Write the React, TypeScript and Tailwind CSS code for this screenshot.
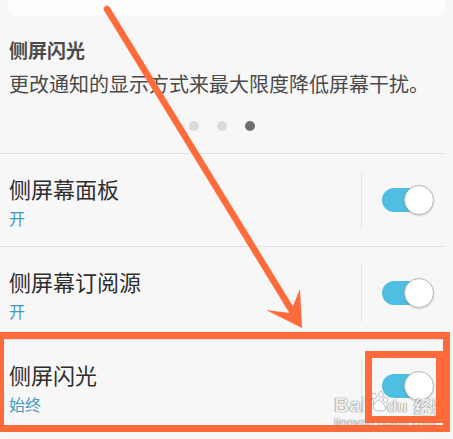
import React from "react";

type Row = {
  title: string;
  status?: string;
};

const rows: Row[] = [
  { title: "侧屏幕面板", status: "开" },
  { title: "侧屏幕订阅源", status: "开" },
  { title: "侧屏闪光", status: "始终" },
];

function Toggle() {
  return (
    <div className="relative h-[30px] w-[52px] shrink-0">
      <div className="absolute left-0 top-[3px] h-6 w-[46px] rounded-full bg-[#4fbee3]" />
      <div className="absolute right-0 top-0 h-[30px] w-[30px] rounded-full border border-[#b9b9b9] bg-white shadow-[0_1px_2px_rgba(0,0,0,0.18)]" />
    </div>
  );
}

function SettingRow({ row }: { row: Row }) {
  return (
    <div className="flex items-center pl-[9px] pr-[19px]">
      <div className="flex-1 pb-[17px] pt-[21px]">
        <p className="text-[22px] leading-[26px] text-[#2e2e2e]">{row.title}</p>
        <p className="mt-1.5 text-[16px] leading-[22px] text-[#4299c0]">
          {row.status}
        </p>
      </div>
      <div className="h-[57px] w-px bg-[#e4e4e4]" />
      <div className="ml-5">
        <Toggle />
      </div>
    </div>
  );
}

function Watermark() {
  return (
    <div className="pointer-events-none absolute left-[334px] top-[391px] select-none text-white/90 [text-shadow:0_0_1px_rgba(0,0,0,0.6),0_0_1px_rgba(0,0,0,0.4)]">
      <div className="flex items-end gap-0.5 font-['Liberation_Sans',sans-serif] text-[21px] font-bold leading-none">
        <span>Bai</span>
        <svg width="20" height="22" viewBox="0 0 20 22" className="mb-0.5">
          <g fill="rgba(255,255,255,0.9)" stroke="rgba(0,0,0,0.35)" strokeWidth="0.7">
            <ellipse cx="5" cy="5" rx="2.4" ry="3" />
            <ellipse cx="12" cy="3.5" rx="2.4" ry="3" />
            <ellipse cx="2.5" cy="11" rx="2.2" ry="2.8" />
            <ellipse cx="16.5" cy="9" rx="2.2" ry="2.8" />
            <path d="M9 9 C5 12 3 17 6 19 C8 20.5 11 19 13 20 C16 21 18 17 15 14 C13 12 12 8 9 9 Z" />
          </g>
        </svg>
        <span className="-ml-1 text-[17px]">du</span>
        <span className="ml-1 font-['Noto_Sans_CJK_SC',sans-serif] text-[18px]">
          经验
        </span>
      </div>
      <p className="mt-0.5 font-['Liberation_Sans',sans-serif] text-[12px] leading-none tracking-[0.3px]">
        jingyan.baidu.com
      </p>
    </div>
  );
}

function Annotations() {
  return (
    <>
      <svg
        className="pointer-events-none absolute left-0 top-0"
        width="453"
        height="439"
        viewBox="0 0 453 439"
      >
        <line
          x1="107"
          y1="9"
          x2="292"
          y2="311"
          stroke="#ff6b3b"
          strokeWidth="6.5"
          strokeLinecap="round"
        />
        <path d="M302 328 L266 310 L290 313 L300 289 Z" fill="#ff6b3b" />
      </svg>
      <div className="pointer-events-none absolute left-[-3px] top-[332px] h-[100px] w-[453px] border-[7px] border-[#ff6b3b]" />
      <div className="pointer-events-none absolute left-[365px] top-[351px] h-[72px] w-[78px] border-[7px] border-[#ff6b3b]" />
    </>
  );
}

export default function App() {
  return (
    <div className="relative h-[439px] w-[453px] overflow-hidden bg-[#f7f7f7] font-['Noto_Sans_CJK_SC','Noto_Sans',sans-serif]">
      <div className="mx-2 h-4 rounded-b-lg bg-[#fdfdfd]" />

      <div className="px-[9px] pb-[22px]">
        <p className="mt-[21px] text-[19px] font-bold leading-[26px] text-[#4a4a4a]">
          侧屏闪光
        </p>
        <p className="mt-2 text-[20px] leading-[26px] text-[#4a4a4a]">
          更改通知的显示方式来最大限度降低屏幕干扰。
        </p>
        <div className="mt-6 flex gap-[18px] pl-[180px]">
          <span className="h-[10px] w-[10px] rounded-full bg-[#dadada]" />
          <span className="h-[10px] w-[10px] rounded-full bg-[#dadada]" />
          <span className="h-[10px] w-[10px] rounded-full bg-[#6e6e6e]" />
        </div>
      </div>

      {rows.map((row) => (
        <div key={row.title}>
          <div className="mr-2 h-px bg-[#e2e2e2]" />
          <SettingRow row={row} />
        </div>
      ))}

      <Watermark />
      <Annotations />
    </div>
  );
}
